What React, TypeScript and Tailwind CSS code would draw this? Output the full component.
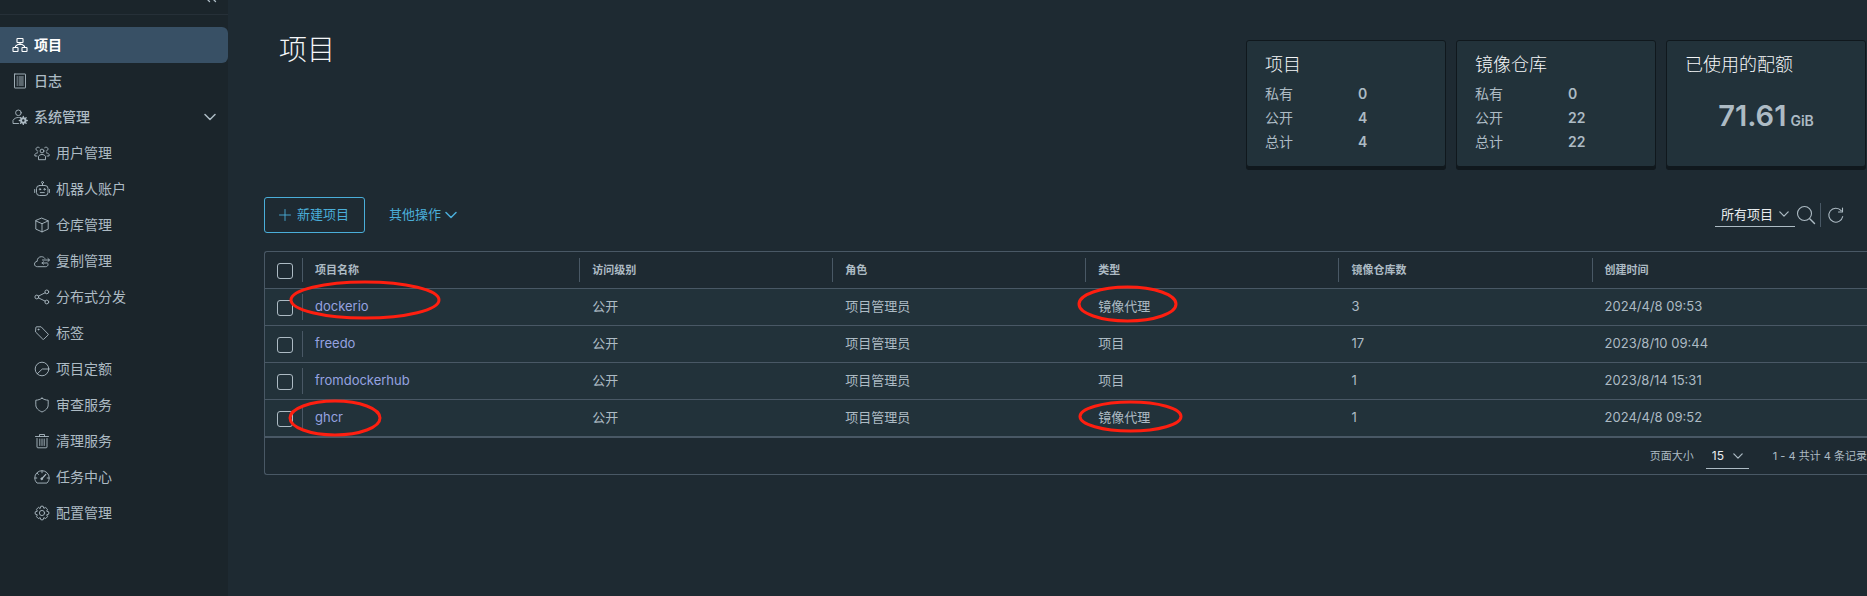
import React from 'react';
import type { ReactNode } from 'react';

type IconProps = { children: ReactNode; className?: string; box?: string };

function Icon({ children, className = 'size-4', box = '0 0 16 16' }: IconProps) {
  return (
    <svg
      viewBox={box}
      className={`shrink-0 ${className}`}
      fill="none"
      stroke="currentColor"
      strokeWidth="0.9"
      strokeLinecap="round"
      strokeLinejoin="round"
      aria-hidden="true"
    >
      {children}
    </svg>
  );
}

const OrgIcon = () => (
  <Icon>
    <g strokeWidth="1.1">
      <rect x="5" y="1.5" width="6" height="4" rx="0.5" />
      <rect x="1" y="10.5" width="5" height="4" rx="0.5" />
      <rect x="10" y="10.5" width="5" height="4" rx="0.5" />
      <path d="M8 5.5v1.8M3.5 10.3V9.2L6 7.4h4l2.5 1.8v1.1" />
    </g>
  </Icon>
);

const LogIcon = () => (
  <Icon>
    <rect x="2.5" y="1" width="11" height="14" rx="0.3" />
    <path d="M5 4h.6M7 4h4.3M5 6h.6M7 6h4.3M5 8h.6M7 8h4.3M5 10h.6M7 10h4.3M5 12h.6M7 12h4.3" />
  </Icon>
);

const AdminIcon = () => (
  <Icon>
    <circle cx="6.4" cy="3.8" r="2.8" />
    <path d="M6.500 14.500H1v-3.200c1.300-1.900 3.200-2.800 5.400-2.800.7 0 1.300.1 1.800.2" />
    <circle cx="11.300" cy="11.500" r="2.200" strokeWidth="1.900" />
    <path
      d="M11.300 7.500v1M11.300 14.500v1M7.300 11.500h1M14.300 11.500h1M8.500 8.700l.7.700M13.400 13.600l.7.700M14.100 8.700l-.7.700M9.200 13.600l-.7.700"
      strokeWidth="1.300"
    />
  </Icon>
);

const UsersIcon = () => (
  <Icon>
    <circle cx="8" cy="6" r="1.900" />
    <path d="M4.500 14.300v-3c.8-1.200 2-1.800 3.500-1.800s2.700.6 3.500 1.800v3z" />
    <path d="M5.300 2.600a2 2 0 1 0-1.500 3.500M10.700 2.600a2 2 0 1 1 1.500 3.500M3.600 7.800C2.400 8 1.500 8.500.9 9.300V11h2M12.400 7.800c1.200.2 2.100.7 2.700 1.500V11h-2" />
  </Icon>
);

const RobotIcon = () => (
  <Icon>
    <circle cx="8.500" cy="1.500" r="1" />
    <path d="M8.500 2.500v2" />
    <rect x="2.500" y="4.500" width="11.500" height="10" rx="3" />
    <circle cx="6" cy="8.300" r="0.700" />
    <circle cx="10.500" cy="8.300" r="0.700" />
    <path d="M6.300 11.600h4M.7 8.500v3M15.600 8.500v3" />
  </Icon>
);

const CubeIcon = () => (
  <Icon>
    <path d="M8 1.200l6.200 2.600v8.300L8 14.900l-6.200-2.800V3.800zM1.800 3.900L8 6.700l6.200-2.800M8 6.700v8.200" />
  </Icon>
);

const CloudIcon = () => (
  <Icon>
    <path d="M13.300 9.800c.5.500.7 1.100.7 1.700 0 1.300-1 2.200-2.300 2.200H3.500C1.800 13.700.5 12.700.5 11.100c0-1.500 1.100-2.600 2.600-2.700C3.200 5.400 5 3.700 7.400 3.700c1.500 0 2.700.6 3.500 1.700" />
    <path d="M8.500 7h6.800M13.900 5.500L15.500 7l-1.600 1.500M12.500 10H8M9.500 8.800L8.200 10l1.300 1.200" />
  </Icon>
);

const ShareIcon = () => (
  <Icon>
    <circle cx="2.800" cy="8" r="1.900" />
    <circle cx="12.800" cy="2.900" r="1.900" />
    <circle cx="12.800" cy="13" r="1.900" />
    <path d="M4.500 7.100l6.600-3.300M4.500 8.900l6.600 3.200" />
  </Icon>
);

const TagIcon = () => (
  <Icon>
    <path d="M1.800 2.600c0-.5.3-.8.800-.8h4.500l7 7.200c.3.300.3.700 0 1l-4.300 4.200c-.3.300-.7.300-1 0l-7-7z" />
    <circle cx="4.400" cy="4.500" r="0.500" />
  </Icon>
);

const QuotaIcon = () => (
  <Icon>
    <circle cx="8" cy="8" r="6.800" />
    <path d="M3.200 12.800L8.300 8h6.500" />
  </Icon>
);

const ShieldIcon = () => (
  <Icon>
    <path d="M8 1.200c1.900 1.300 4 1.900 6.200 2v4.600c0 3.200-2.300 5.500-6.200 7.200-3.900-1.700-6.200-4-6.200-7.200V3.200c2.200-.1 4.300-.7 6.200-2z" />
  </Icon>
);

const TrashIcon = () => (
  <Icon>
    <path d="M1.500 3.500h13M5.500 3.300V1.500h5v1.800M3 5.500V14c0 .5.400.8.900.8h8.200c.5 0 .9-.3.900-.8V5.500M5.800 6v6.500M8 6v6.500M10.200 6v6.500" />
  </Icon>
);

const GaugeIcon = () => (
  <Icon>
    <path d="M2.800 13.800C1.500 12.500.8 10.800.8 8.900a7.200 7.200 0 0 1 14.400 0c0 1.900-.7 3.600-2 4.900z" />
    <path d="M8 2v1.800M1 9h1.800M13.200 9H15M3.200 4.300l1.200 1.100" />
    <path d="M8 9.500l3.800-4.200" strokeWidth="1.200" />
    <circle cx="7.700" cy="9.800" r="0.900" fill="currentColor" />
  </Icon>
);

const GearIcon = () => (
  <Icon>
    <path d="M6.200 3.300L6.900 1.200H9.100L9.800 3.300L11.700 2.500L13.500 4.300L12.700 6.200L14.800 6.900V9.100L12.700 9.800L13.500 11.700L11.700 13.500L9.800 12.700L9.100 14.800H6.900L6.200 12.700L4.300 13.500L2.500 11.700L3.300 9.800L1.200 9.100V6.900L3.300 6.200L2.500 4.300L4.300 2.500z" />
    <circle cx="8" cy="8" r="2.600" />
  </Icon>
);

const Chevron = ({ className = 'size-3' }: { className?: string }) => (
  <Icon className={className} box="0 0 12 12">
    <path d="M1 3.500l5 5 5-5" strokeWidth="1.500" />
  </Icon>
);

const navChildren = [
  { label: '用户管理', icon: <UsersIcon /> },
  { label: '机器人账户', icon: <RobotIcon /> },
  { label: '仓库管理', icon: <CubeIcon /> },
  { label: '复制管理', icon: <CloudIcon /> },
  { label: '分布式分发', icon: <ShareIcon /> },
  { label: '标签', icon: <TagIcon /> },
  { label: '项目定额', icon: <QuotaIcon /> },
  { label: '审查服务', icon: <ShieldIcon /> },
  { label: '清理服务', icon: <TrashIcon /> },
  { label: '任务中心', icon: <GaugeIcon /> },
  { label: '配置管理', icon: <GearIcon /> },
];

function Sidebar() {
  return (
    <nav className="w-[228px] shrink-0 bg-[#1b252b] text-sm text-[#adbbc4]">
      <div className="flex h-[15px] items-start justify-end overflow-hidden border-b border-[#263038] pr-2.5">
        <button type="button" aria-label="收起" className="-mt-3">
          <Icon>
            <path d="M7 3L2 8l5.500 5.500M13 3L8 8l5.500 5.500" strokeWidth="1.300" />
          </Icon>
        </button>
      </div>
      <ul className="pt-3">
        <li>
          <a
            href="#projects"
            aria-current="page"
            className="flex h-9 items-center gap-1.5 rounded-r-md bg-[#385065] pl-3 font-bold text-white"
          >
            <OrgIcon />
            项目
          </a>
        </li>
        <li>
          <a href="#logs" className="flex h-9 items-center gap-1.5 pl-3 font-medium">
            <LogIcon />
            日志
          </a>
        </li>
        <li>
          <button
            type="button"
            aria-expanded="true"
            className="flex h-9 w-full items-center gap-1.5 pr-3 pl-3 font-medium"
          >
            <AdminIcon />
            <span className="flex-1 text-left">系统管理</span>
            <Chevron />
          </button>
          <ul>
            {navChildren.map((item) => (
              <li key={item.label}>
                <a href={`#${item.label}`} className="flex h-9 items-center gap-1.5 pl-[34px]">
                  {item.icon}
                  {item.label}
                </a>
              </li>
            ))}
          </ul>
        </li>
      </ul>
    </nav>
  );
}

const cardClass =
  'h-[127px] w-[200px] rounded-[3px] border border-[#10181d] bg-[#22323a] px-[18px] pt-3 shadow-[0_3px_0_0_#10181d]';

function StatCard({ title, rows }: { title: string; rows: [string, number][] }) {
  return (
    <section className={cardClass}>
      <h2 className="text-lg leading-6 font-light text-[#f4f6f8]">{title}</h2>
      <dl className="grid grid-cols-[93px_1fr] pt-[5px] text-sm leading-6">
        {rows.map(([label, value]) => (
          <React.Fragment key={label}>
            <dt>{label}</dt>
            <dd className="font-semibold">{value}</dd>
          </React.Fragment>
        ))}
      </dl>
    </section>
  );
}

function QuotaCard() {
  return (
    <section className={cardClass}>
      <h2 className="text-lg leading-6 font-light text-[#f4f6f8]">已使用的配额</h2>
      <p className="pt-[19px] text-center leading-10 font-semibold">
        <span className="text-[29px]">71.61</span> <span className="text-sm">GiB</span>
      </p>
    </section>
  );
}

function Ring({ className }: { className: string }) {
  return (
    <svg aria-hidden="true" className={`pointer-events-none absolute z-10 ${className}`}>
      <ellipse
        cx="50%"
        cy="50%"
        fill="none"
        stroke="#ff1f10"
        strokeWidth="3"
        className="[rx:calc(50%-2px)] [ry:calc(50%-2px)]"
      />
    </svg>
  );
}

type Project = {
  name: string;
  type: string;
  repos: number;
  created: string;
  nameRing?: string;
  typeRing?: string;
};

const projects: Project[] = [
  {
    name: 'dockerio',
    type: '镜像代理',
    repos: 3,
    created: '2024/4/8 09:53',
    nameRing: '-top-[9px] -left-[13px] h-10 w-[152px]',
    typeRing: '-top-[4px] -left-[8px] h-[38px] w-[101px]',
  },
  { name: 'freedo', type: '项目', repos: 17, created: '2023/8/10 09:44' },
  { name: 'fromdockerhub', type: '项目', repos: 1, created: '2023/8/14 15:31' },
  {
    name: 'ghcr',
    type: '镜像代理',
    repos: 1,
    created: '2024/4/8 09:52',
    nameRing: '-top-px -left-[14px] h-[38px] w-[94px]',
    typeRing: 'top-0 -left-[7px] h-[33px] w-[105px]',
  },
];

const columns = ['项目名称', '访问级别', '角色', '类型', '镜像仓库数', '创建时间'];

function Check({ label }: { label: string }) {
  return (
    <input
      type="checkbox"
      aria-label={label}
      className="mt-0.5 ml-3 block size-4 appearance-none rounded-[3px] border border-[#adbbc4] checked:bg-[#4aaed9]"
    />
  );
}

function ProjectTable() {
  return (
    <div className="mt-[18px] rounded-l-[3px] border-y border-l border-[#495865]">
      <table className="w-full table-fixed border-separate border-spacing-0 text-left text-[13px]">
        <colgroup>
          <col className="w-[37px]" />
          <col className="w-[17.3%]" />
          <col className="w-[15.8%]" />
          <col className="w-[15.8%]" />
          <col className="w-[15.8%]" />
          <col className="w-[15.8%]" />
          <col />
        </colgroup>
        <thead className="text-[11px]">
          <tr>
            <th className="h-[37px] border-b border-[#495865] p-0">
              <Check label="全选" />
            </th>
            {columns.map((c) => (
              <th key={c} className="h-[37px] border-b border-[#495865] p-0">
                <div className="h-6 border-l border-[#495865] pl-3 leading-6 font-bold">{c}</div>
              </th>
            ))}
          </tr>
        </thead>
        <tbody className="bg-[#22323a] [&_td]:relative [&_td]:h-[37px] [&_td]:border-b [&_td]:border-[#495865] [&_td]:p-0 [&_td]:pl-[13px] [&_tr:last-child_td]:h-[38px] [&_tr:last-child_td]:border-b-2">
          {projects.map((p) => (
            <tr key={p.name}>
              <td className="pl-0!">
                <Check label={p.name} />
              </td>
              <td className="pl-0!">
                <div className="h-[26px] border-l border-[#495865] pl-3 leading-6">
                  <a href={`#${p.name}`} className="text-[#96a3e0]">
                    {p.name}
                  </a>
                </div>
                {p.nameRing && <Ring className={p.nameRing} />}
              </td>
              <td>公开</td>
              <td>项目管理员</td>
              <td>
                {p.type}
                {p.typeRing && <Ring className={p.typeRing} />}
              </td>
              <td>{p.repos}</td>
              <td>{p.created}</td>
            </tr>
          ))}
        </tbody>
      </table>
      <div className="flex h-9 items-center justify-end text-[11px]">
        <label htmlFor="page-size" className="pr-3">
          页面大小
        </label>
        <div className="relative mt-px mr-6">
          <select
            id="page-size"
            defaultValue="15"
            className="h-6 w-[43px] appearance-none border-b border-[#adbbc4] bg-transparent pl-1.5 text-xs text-[#eaedf0]"
          >
            <option>15</option>
            <option>25</option>
            <option>50</option>
          </select>
          <span className="pointer-events-none absolute top-1.5 right-1.5">
            <Chevron className="size-2.5" />
          </span>
        </div>
        <span className="whitespace-nowrap">1 - 4 共计 4 条记录</span>
      </div>
    </div>
  );
}

export default function App() {
  return (
    <div className="flex min-h-screen bg-[#1e2a32] font-['Inter','Noto_Sans_CJK_SC',sans-serif] text-[#adbbc4]">
      <Sidebar />
      <main className="min-w-0 flex-1 pt-10 pl-9">
        <header className="flex items-start justify-between pr-px pl-[15px]">
          <h1 className="-mt-2 text-[28px] leading-9 font-light text-[#f4f6f8]">项目</h1>
          <div className="flex gap-2.5">
            <StatCard title="项目" rows={[['私有', 0], ['公开', 4], ['总计', 4]]} />
            <StatCard title="镜像仓库" rows={[['私有', 0], ['公开', 22], ['总计', 22]]} />
            <QuotaCard />
          </div>
        </header>

        <div className="mt-[30px] flex h-9 items-center text-[13px]">
          <button
            type="button"
            className="flex h-9 w-[101px] items-center gap-1.5 rounded-[3px] border border-[#4aaed9] pl-3.5 text-[#4aaed9]"
          >
            <Icon className="size-3" box="0 0 12 12">
              <path d="M6 .5v11M.5 6h11" />
            </Icon>
            新建项目
          </button>
          <button type="button" className="ml-6 flex items-center gap-1 text-[#4aaed9]">
            其他操作
            <Chevron />
          </button>
          <div className="mr-[22px] ml-auto flex items-center">
            <div className="relative">
              <select
                aria-label="项目范围"
                className="h-6 w-20 appearance-none border-b border-[#adbbc4] bg-transparent pl-1.5 text-[13px] text-[#eaedf0]"
              >
                <option>所有项目</option>
                <option>私有项目</option>
                <option>公开项目</option>
              </select>
              <span className="pointer-events-none absolute top-1.5 right-1.5">
                <Chevron className="size-2.5" />
              </span>
            </div>
            <button type="button" aria-label="搜索" className="ml-px">
              <Icon className="size-5" box="0 0 20 20">
                <circle cx="8.500" cy="8.500" r="7" strokeWidth="1.100" />
                <path d="M14 14l4.500 4.500" strokeWidth="1.400" />
              </Icon>
            </button>
            <span className="ml-1 h-6 w-px bg-[#495865]" />
            <button type="button" aria-label="刷新" className="ml-1.5">
              <Icon className="size-[18px]" box="0 0 18 18">
                <path d="M15.700 10.500a7 7 0 1 1-1.500-5.800M15.500 2v4h-4" strokeWidth="1.100" />
              </Icon>
            </button>
          </div>
        </div>

        <ProjectTable />
      </main>
    </div>
  );
}
